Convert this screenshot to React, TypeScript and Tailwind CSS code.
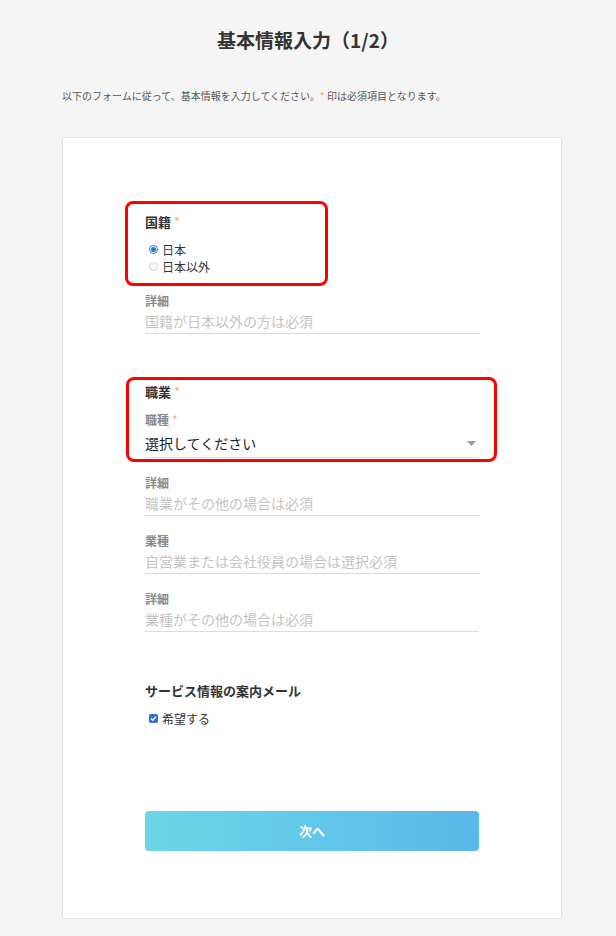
import React from "react";

const font = { fontFamily: '"Noto Sans CJK JP", "Noto Sans", sans-serif' };

function Star() {
  return <span className="text-[#f2b36b] ml-[3px] font-normal">*</span>;
}

function TextField({ label, placeholder }: { label: string; placeholder: string }) {
  return (
    <div>
      <div className="text-[12px] leading-[16px] font-bold text-[#8a8a8a]">{label}</div>
      <div className="h-[25px] border-b border-[#dcdcdc] flex items-center text-[14px] text-[#c4c4c4]">
        {placeholder}
      </div>
    </div>
  );
}

export default function App() {
  return (
    <div className="min-h-[936px] bg-[#f5f5f5] text-[#333]" style={font}>
      <div className="pt-[26px] text-center text-[19px] leading-[28px] font-bold text-[#333]">
        基本情報入力（1/2）
      </div>
      <div className="mt-[35px] ml-[62px] text-[10px] leading-[14px] text-[#555]">
        以下のフォームに従って、基本情報を入力してください。<span className="text-[#f2a93b]">*</span> 印は必須項目となります。
      </div>
      <div className="mt-[34px] ml-[62px] w-[500px] bg-white border border-[#e3e3e3] rounded-[3px] px-[82px] pt-[75px] pb-[67px]">
        {/* 国籍 */}
        <div className="relative">
          <div className="absolute left-[-20px] top-[-12px] w-[203px] h-[85px] border-[3px] border-[#ff0000] rounded-[8px]" />
          <div className="text-[13px] leading-[18px] font-bold text-[#333]">
            国籍<Star />
          </div>
          <div className="mt-[10px] flex flex-col text-[12px] leading-[17px] text-[#333]">
            <label className="flex items-center gap-[4px] pl-[4px]">
              <span className="w-[9px] h-[9px] rounded-full border border-[#2f6fd8] bg-white flex items-center justify-center">
                <span className="w-[5px] h-[5px] rounded-full bg-[#2f6fd8]" />
              </span>
              日本
            </label>
            <label className="flex items-center gap-[4px] pl-[4px]">
              <span className="w-[9px] h-[9px] rounded-full border border-[#d0d0d0] bg-[#fafafa]" />
              日本以外
            </label>
          </div>
        </div>
        <div className="mt-[18px]">
          <TextField label="詳細" placeholder="国籍が日本以外の方は必須" />
        </div>

        {/* 職業 */}
        <div className="relative mt-[49px]">
          <div className="absolute left-[-19px] right-[-18px] top-[-6px] h-[85px] border-[3px] border-[#ff0000] rounded-[8px]" />
          <div className="text-[13px] leading-[18px] font-bold text-[#333]">
            職業<Star />
          </div>
          <div className="mt-[11px] text-[12px] leading-[16px] font-bold text-[#8a8a8a]">
            職種<Star />
          </div>
          <div className="h-[30px] pt-[2px] border-b border-[#dcdcdc] flex items-center justify-between text-[14px] text-[#222]">
            <span>選択してください</span>
            <svg width="9" height="6" viewBox="0 0 9 6" className="mr-[3px]">
              <path d="M0 0 L9 0 L4.5 5 Z" fill="#9a9a9a" />
            </svg>
          </div>
        </div>
        <div className="mt-[17px]">
          <TextField label="詳細" placeholder="職業がその他の場合は必須" />
        </div>
        <div className="mt-[17px]">
          <TextField label="業種" placeholder="自営業または会社役員の場合は選択必須" />
        </div>
        <div className="mt-[17px]">
          <TextField label="詳細" placeholder="業種がその他の場合は必須" />
        </div>

        {/* メール */}
        <div className="mt-[50px] text-[13px] leading-[18px] font-bold text-[#333]">
          サービス情報の案内メール
        </div>
        <label className="mt-[10px] flex items-center gap-[4px] pl-[4px] text-[12px] leading-[17px] text-[#333]">
          <span className="w-[9px] h-[9px] rounded-[2px] bg-[#2f6fd8] flex items-center justify-center">
            <svg width="7" height="7" viewBox="0 0 7 7">
              <path d="M1 3.6 L2.8 5.3 L6 1.6" stroke="white" strokeWidth="1.4" fill="none" />
            </svg>
          </span>
          希望する
        </label>

        <button className="mt-[84px] w-full h-[40px] rounded-[4px] bg-gradient-to-r from-[#6dd6e6] to-[#58b9eb] text-white text-[13px] font-bold">
          次へ
        </button>
      </div>
    </div>
  );
}
